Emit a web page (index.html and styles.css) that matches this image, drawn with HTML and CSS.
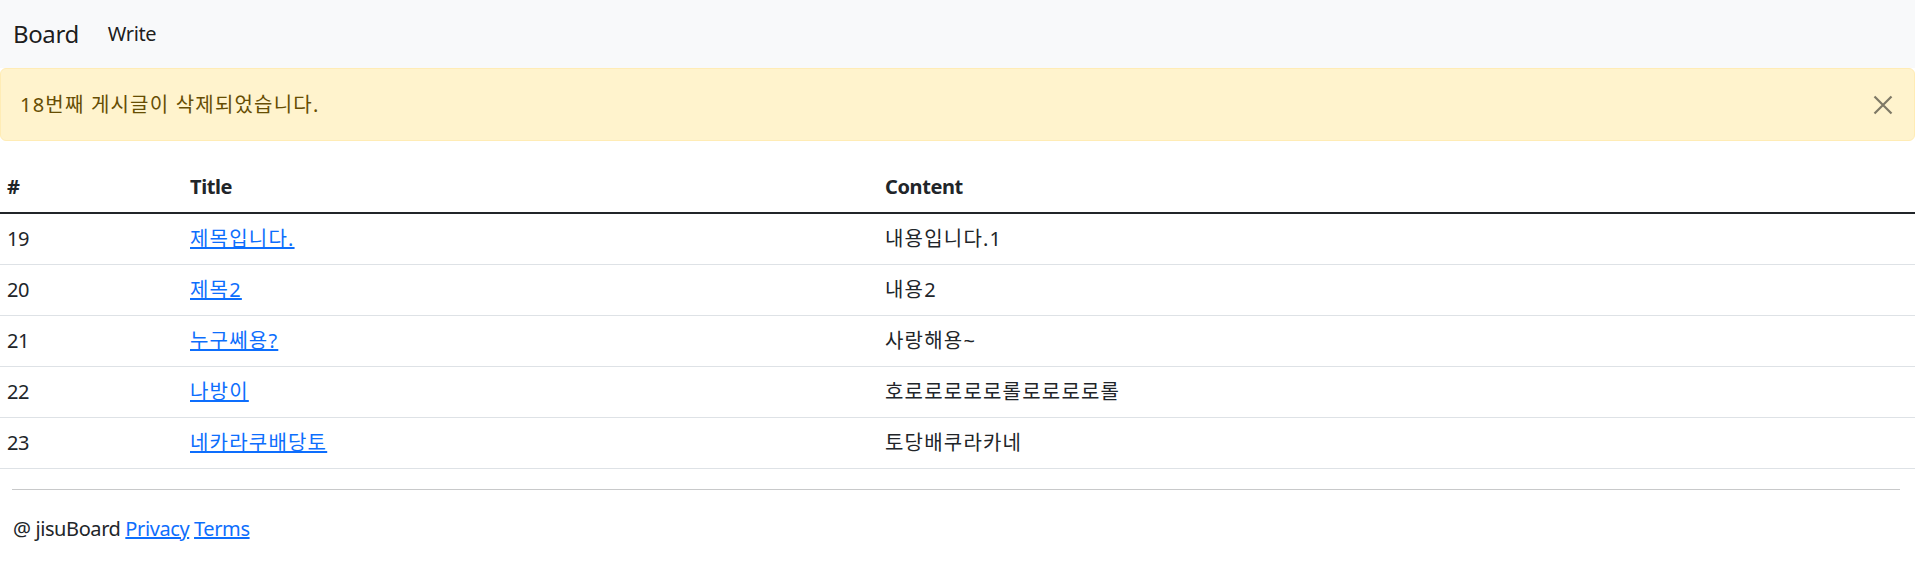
FILE: index.html
```html
<!DOCTYPE html>
<html lang="ko">
<head>
<meta charset="utf-8">
<title>Board</title>
<link rel="stylesheet" href="styles.css">
</head>
<body>
<div class="page">
  <nav class="navbar">
    <a class="brand" href="#">Board</a>
    <a class="nav-link" href="#">Write</a>
  </nav>
  <div class="alert">
    <span class="ko">18번째 게시글이 삭제되었습니다.</span>
    <button class="btn-close" aria-label="Close">
      <svg width="20" height="20" viewBox="0 0 20 20"><path d="M1.5 1.5 L18.5 18.5 M18.5 1.5 L1.5 18.5" stroke="#000" stroke-width="2.2" fill="none"/></svg>
    </button>
  </div>
  <table class="table">
    <thead>
      <tr><th class="c1">#</th><th class="c2">Title</th><th>Content</th></tr>
    </thead>
    <tbody>
      <tr><td>19</td><td><a class="ko" href="#">제목입니다.</a></td><td class="ko">내용입니다.1</td></tr>
      <tr><td>20</td><td><a class="ko" href="#">제목2</a></td><td class="ko">내용2</td></tr>
      <tr><td>21</td><td><a class="ko" href="#">누구쎄용?</a></td><td class="ko">사랑해용~</td></tr>
      <tr><td>22</td><td><a class="ko" href="#">나방이</a></td><td class="ko">호로로로로로롤로로로로롤</td></tr>
      <tr><td>23</td><td><a class="ko" href="#">네카라쿠배당토</a></td><td class="ko">토당배쿠라카네</td></tr>
    </tbody>
  </table>
  <footer class="footer">
    <hr class="rule">
    <p class="foot-text">@ jisuBoard <a href="#">Privacy</a> <a href="#">Terms</a></p>
  </footer>
</div>
</body>
</html>
```
FILE: styles.css
```css
* { box-sizing: border-box; }
html, body { margin: 0; padding: 0; background: #fff; }
body {
  font-family: "Noto Sans", "Noto Sans CJK KR", sans-serif;
  font-size: 20px;
  line-height: 30px;
  color: #212529;
  letter-spacing: -0.4px;
}
.ko { letter-spacing: 1.2px; }
.page { width: calc(100% - 2px); }
a { color: #0d6efd; }
.navbar {
  height: 68px;
  background: #f8f9fa;
  display: flex;
  align-items: center;
  padding: 0 13px;
}
.brand {
  font-size: 24px;
  color: rgba(0,0,0,.9);
  text-decoration: none;
  margin-right: 29px;
}
.nav-link {
  font-size: 20px;
  color: rgba(0,0,0,.9);
  text-decoration: none;
}
.alert {
  display: flex;
  align-items: center;
  justify-content: space-between;
  height: 73px;
  padding: 0 20px 0 19px;
  background: #fff3cd;
  border: 1px solid #ffecb5;
  border-radius: 6px;
  color: #664d03;
  margin-bottom: 20px;
}
.btn-close {
  background: none;
  border: 0;
  padding: 0;
  opacity: .5;
  width: 20px;
  height: 20px;
  margin-right: 1px;
  display: flex;
}
.table {
  width: 100%;
  border-collapse: collapse;
  margin-bottom: 20px;
}
.table th, .table td {
  text-align: left;
  padding: 10px 7px;
  height: 51px;
  border-bottom: 1px solid #dee2e6;
}
.table th {
  font-weight: 700;
  border-bottom: 2.5px solid #212529;
  height: 52px;
}
.c1 { width: 183px; }
.c2 { width: 695px; }
.footer { padding: 0 15px 0 12px; }
.rule {
  margin: 0;
  border: 0;
  border-top: 1px solid #c8c9ca;
}
.foot-text { margin: 24px 0 0 1px; }
```
